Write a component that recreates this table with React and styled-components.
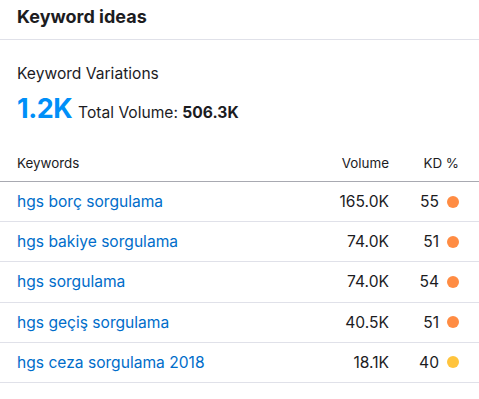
import React from "react";
import styled, { createGlobalStyle } from "styled-components";

const GlobalStyle = createGlobalStyle`
  html, body {
    margin: 0;
    padding: 0;
    background: #ffffff;
  }
  body {
    font-family: Inter, "Noto Sans", Arial, sans-serif;
    color: #1c1c1f;
  }
`;

const Panel = styled.div`
  width: 479px;
  height: 399px;
  background: #fff;
  overflow: hidden;
`;

const Header = styled.div`
  display: flex;
  align-items: center;
  padding: 0 17px;
  border-bottom: 1px solid #e0e1e9;
  box-sizing: border-box;
  height: 40px;
`;

const Title = styled.h2`
  margin: 0;
  font-size: 18px;
  font-weight: 700;
  color: #1c1c1f;
  margin-top: -7px;
`;

const Summary = styled.div`
  padding: 24px 17px 0;
`;

const Label = styled.div`
  font-size: 15.6px;
  line-height: 20px;
`;

const Stats = styled.div`
  display: flex;
  align-items: baseline;
  gap: 6px;
  margin-top: 8px;
`;

const Big = styled.span`
  font-size: 27px;
  font-weight: 700;
  color: #008ff8;
  letter-spacing: -0.5px;
`;

const Small = styled.span`
  font-size: 15.6px;
  b {
    font-weight: 700;
  }
`;

const Table = styled.div`
  margin-top: 19px;
`;

const Row = styled.div`
  display: grid;
  grid-template-columns: 1fr 90px 70px;
  align-items: center;
  box-sizing: border-box;
  height: ${(p) => (p.head ? "38px" : "40.2px")};
  padding: 0 20px 0 17px;
  border-bottom: 1px solid ${(p) => (p.head ? "#a8a9b1" : "#e0e1e9")};
  font-size: ${(p) => (p.head ? "13.4px" : "15.6px")};
`;

const Keyword = styled.a`
  color: #006dca;
  text-decoration: none;
`;

const Num = styled.div`
  text-align: right;
`;

const Kd = styled.div`
  display: flex;
  justify-content: flex-end;
  align-items: center;
  gap: 8px;
`;

const Dot = styled.span`
  width: 12px;
  height: 12px;
  border-radius: 50%;
  background: ${(p) => p.color};
`;

const rows = [
  ["hgs borç sorgulama", "165.0K", 55, "#ff8c43"],
  ["hgs bakiye sorgulama", "74.0K", 51, "#ff8c43"],
  ["hgs sorgulama", "74.0K", 54, "#ff8c43"],
  ["hgs geçiş sorgulama", "40.5K", 51, "#ff8c43"],
  ["hgs ceza sorgulama 2018", "18.1K", 40, "#ffc43d"],
];

const App = () => {
  return (
    <Panel>
      <GlobalStyle />
      <Header>
        <Title>Keyword ideas</Title>
      </Header>
      <Summary>
        <Label>Keyword Variations</Label>
        <Stats>
          <Big>1.2K</Big>
          <Small>
            Total Volume: <b>506.3K</b>
          </Small>
        </Stats>
      </Summary>
      <Table>
        <Row head>
          <div>Keywords</div>
          <Num>Volume</Num>
          <Num>KD %</Num>
        </Row>
        {rows.map(([kw, vol, kd, color]) => (
          <Row key={kw}>
            <Keyword href="#">{kw}</Keyword>
            <Num>{vol}</Num>
            <Kd>
              {kd}
              <Dot color={color} />
            </Kd>
          </Row>
        ))}
      </Table>
    </Panel>
  );
};

export default App;
